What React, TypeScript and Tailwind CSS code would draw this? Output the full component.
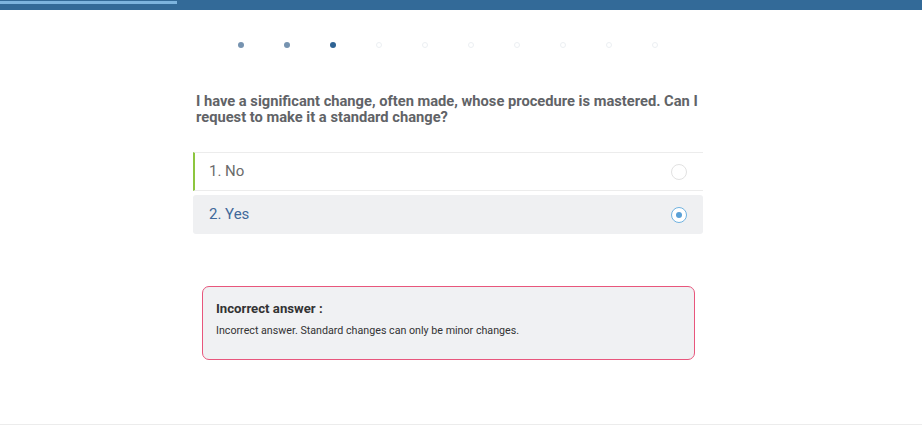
import React from "react";

const dots = [0, 1, 2, 3, 4, 5, 6, 7, 8, 9];

export default function App() {
  return (
    <div
      className="w-[922px] h-[427px] bg-white flex flex-col overflow-hidden"
      style={{ fontFamily: "Roboto, 'Liberation Sans', sans-serif" }}
    >
      <div className="h-[10px] bg-[#336a98] flex flex-col pt-[1px]">
        <div className="h-[3px] w-[177px] bg-[#7db4de]" />
      </div>
      <div className="w-[896px] flex-1 flex flex-col">
        <div className="flex justify-center gap-[40px] mt-[32px] h-[6px] items-center">
          {dots.map((i) => (
            <div
              key={i}
              className={
                i < 2
                  ? "w-[6px] h-[6px] rounded-full bg-[#7693b0]"
                  : i === 2
                  ? "w-[6px] h-[6px] rounded-full bg-[#2e6394]"
                  : "w-[6px] h-[6px] rounded-full border border-[#eceff3]"
              }
            />
          ))}
        </div>
        <div className="w-[510px] mx-auto mt-[45px] flex flex-col">
          <p className="text-[14.7px] leading-[16px] font-bold text-[#616367] px-[3px]">
            I have a significant change, often made, whose procedure is mastered. Can I request to make it a standard change?
          </p>
          <div className="mt-[27px] flex flex-col gap-[4px]">
            <div className="h-[39px] flex items-center justify-between border-y border-[#ececec] border-l-2 border-l-[#8dc63f] pl-[14px] pr-[16px] bg-white">
              <span className="text-[15px] text-[#6b6b6b]">1. No</span>
              <span className="w-[16px] h-[16px] rounded-full border border-[#e2e2e2] bg-white" />
            </div>
            <div className="h-[39px] flex items-center justify-between rounded-[3px] bg-[#eff0f2] pl-[16px] pr-[16px]">
              <span className="text-[15px] text-[#41699a]">2. Yes</span>
              <span className="w-[16px] h-[16px] rounded-full border border-[#6fb2e0] bg-white flex items-center justify-center">
                <span className="w-[6px] h-[6px] rounded-full bg-[#5aa0d6]" />
              </span>
            </div>
          </div>
          <div className="mt-[52px] ml-[9px] mr-[8px] h-[74px] rounded-[7px] border border-[#e8567c] bg-[#f0f1f3] px-[13px] pt-[14px] flex flex-col">
            <div className="text-[13.2px] leading-[16px] font-bold text-[#333333]">Incorrect answer :</div>
            <div className="mt-[7px] text-[10.7px] leading-[14px] text-[#333333]">
              Incorrect answer. Standard changes can only be minor changes.
            </div>
          </div>
        </div>
      </div>
      <div className="h-[3px] border-t border-[#ececec] bg-white" />
    </div>
  );
}
